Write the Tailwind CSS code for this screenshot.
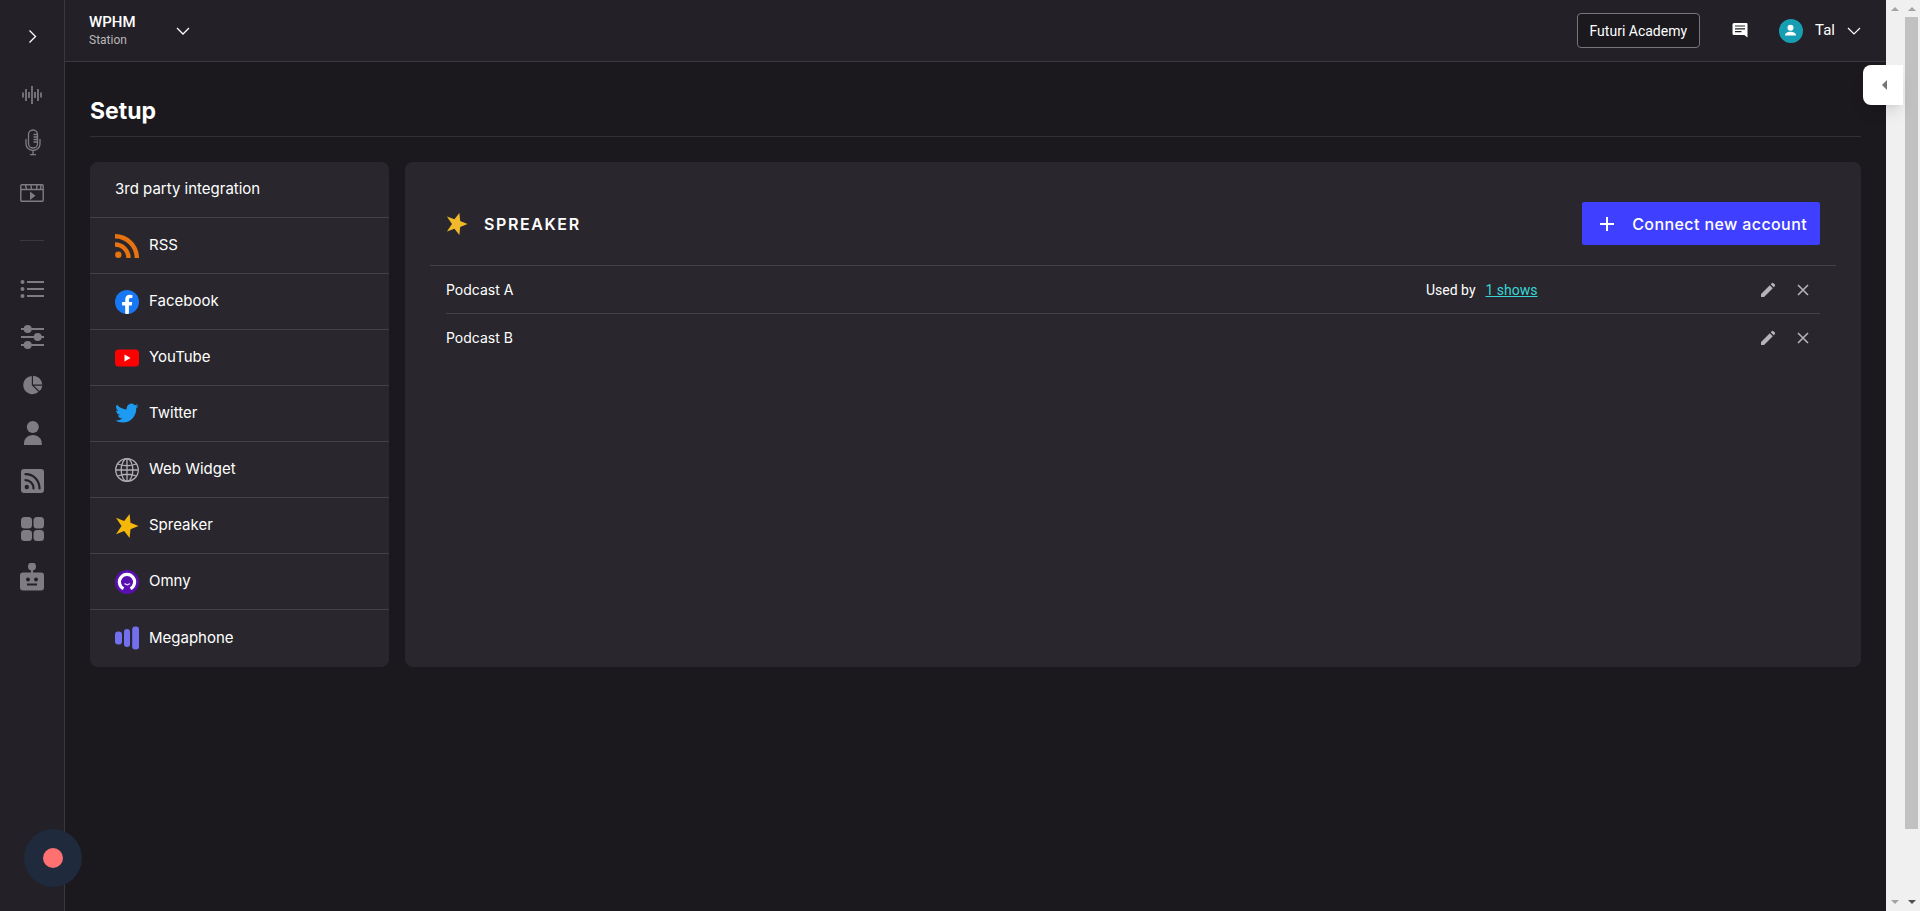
<!DOCTYPE html>
<html lang="en">
<head>
    <meta charset="UTF-8">
    <meta name="viewport" content="width=device-width, initial-scale=1.0">
    <title>Setup</title>
    <script src="https://cdn.jsdelivr.net/npm/@tailwindcss/browser@4"></script>
</head>
<body class="flex min-h-screen bg-[#1b191e] font-['Inter',sans-serif] text-white">

    <!-- Sidebar -->
    <nav aria-label="Main" class="flex w-[65px] shrink-0 flex-col items-center border-r border-[#3a383e] bg-[#232127] pt-3 text-[#7f7d83]">
        <button aria-label="Expand menu" class="mb-[11px] flex h-12 w-full items-center justify-center text-white">
            <svg class="size-6" viewBox="0 0 24 24" fill="none" stroke="currentColor" stroke-width="1.3"><path d="M9.500 6.500l6 6-6 6"/></svg>
        </button>
        <a href="#" aria-label="Audio" class="flex h-12 w-full items-center justify-center">
            <svg class="size-6" viewBox="0 0 24 24" fill="none" stroke="currentColor" stroke-width="1.7"><path d="M3 9.500v5M6 6v12M9 9v6M12 3v18M15 9v6M18 6v12M21 9.500v5"/></svg>
        </a>
        <a href="#" aria-label="Podcasts" class="flex h-12 w-full items-center justify-center">
            <svg class="h-7 w-6" viewBox="0 0 24 28" fill="none" stroke="currentColor" stroke-width="1.3" stroke-linecap="round"><rect x="8.500" y="1" width="9" height="18" rx="4.500"/><path d="M6 10.500v4.500a7 6.500 0 0 0 14 0v-4.500M13 21.500v4M10.500 25.700h5M14 5.500h3M14 8h3M14 10.500h3M14 13h3"/></svg>
        </a>
        <a href="#" aria-label="Video" class="flex h-12 w-full items-center justify-center">
            <svg class="size-6" viewBox="0 0 24 24" fill="none" stroke="currentColor" stroke-width="1.4"><rect x=".8" y="5.800" width="22.400" height="16.500" rx="1"/><path d="M1 10.500h22M5.500 6l1 4.500M11 6l.5 4.500M17 6l-.5 4.500M21 6l-.5 4.500"/><path d="M10 12.500v8.500l5.500-4.250z" fill="currentColor" stroke="none"/></svg>
        </a>
        <div class="flex h-[50px] w-full items-center justify-center"><hr class="w-6 border-[#3a383e]"></div>
        <a href="#" aria-label="List" class="flex h-12 w-full items-center justify-center">
            <svg class="size-6" viewBox="0 0 24 24" fill="none" stroke="currentColor" stroke-width="1.8"><path d="M7 5h17M7 12h17M7 19h17"/><g fill="currentColor" stroke="none"><circle cx="2.500" cy="5" r="2"/><circle cx="2.500" cy="12" r="2"/><circle cx="2.500" cy="19" r="2"/></g></svg>
        </a>
        <a href="#" aria-label="Filters" class="flex h-12 w-full items-center justify-center">
            <svg class="size-6" viewBox="0 0 24 24" fill="none" stroke="currentColor" stroke-width="2"><path d="M1 4h23M1 12h23M1 20h23"/><g fill="currentColor" stroke="none"><circle cx="7.700" cy="4" r="4"/><circle cx="17.700" cy="12" r="4"/><circle cx="7.700" cy="20" r="4"/></g></svg>
        </a>
        <a href="#" aria-label="Analytics" class="flex h-12 w-full items-center justify-center">
            <svg class="size-6" viewBox="0 0 24 24" fill="currentColor"><path d="M11.800 3a9.100 9.100 0 1 0 6.700 15.800l-6.700-6.600z"/><path d="M13 2.800v8.700h9.300a9.300 9.300 0 0 0-9.300-8.700z"/><path d="M14 12.700h8.300a9 9 0 0 1-2.700 5.400z"/></svg>
        </a>
        <a href="#" aria-label="Users" class="flex h-12 w-full items-center justify-center">
            <svg class="size-6" viewBox="0 0 24 24" fill="currentColor"><circle cx="12.800" cy="6" r="6"/><path d="M4 24v-1.500C4 17.500 8 14 12.900 14s8.900 3.500 8.900 8.500V24z"/></svg>
        </a>
        <a href="#" aria-label="Feeds" class="flex h-12 w-full items-center justify-center">
            <svg class="size-6" viewBox="0 0 24 24"><rect x="1" width="23" height="24" rx="3" fill="currentColor"/><circle cx="6.800" cy="18" r="2.200" fill="#232127"/><path d="M5.500 11.200c4.500 0 8 3.500 8 8.200M5.500 5.200c8 0 14 6 14 14.200" fill="none" stroke="#232127" stroke-width="2.200" stroke-linecap="round"/></svg>
        </a>
        <a href="#" aria-label="Apps" class="flex h-12 w-full items-center justify-center">
            <svg class="size-6" viewBox="0 0 24 24" fill="currentColor"><rect x="1" y="0" width="11" height="11.500" rx="3.500"/><rect x="13.500" y="0" width="10.500" height="11.500" rx="3.500"/><rect x="1" y="13" width="11" height="11" rx="3.500"/><rect x="13.500" y="13" width="10.500" height="11" rx="3.500"/></svg>
        </a>
        <a href="#" aria-label="Assistant" class="flex h-12 w-full items-center justify-center">
            <svg class="h-7 w-6" viewBox="0 0 24 28"><g fill="currentColor"><circle cx="12" cy="3.500" r="4"/><path d="M11 6h2v6h-2z"/><rect y="9.500" width="24" height="18" rx="3"/></g><g fill="#232127"><circle cx="8" cy="16.500" r="2"/><circle cx="16" cy="16.500" r="2"/><rect x="7" y="20.500" width="10" height="2"/></g></svg>
        </a>
    </nav>

    <div class="min-w-0 flex-1">
        <!-- Top bar -->
        <header class="flex h-[62px] items-center justify-between border-b border-[#3a383e] bg-[#232127] pr-[25px] pl-6 font-['Roboto',sans-serif]">
            <button class="flex items-center gap-10 text-left">
                <span class="flex flex-col pb-0.5">
                    <span class="text-[15px] leading-5 font-medium">WPHM</span>
                    <span class="text-xs leading-4 text-[#b8b7ba]">Station</span>
                </span>
                <svg class="h-2 w-3.5" viewBox="0 0 14 8" fill="none" stroke="currentColor" stroke-width="1.3"><path d="M1 1l6 6 6-6"/></svg>
            </button>
            <div class="flex items-center">
                <button class="h-[35px] rounded border border-[#77757a] bg-[#1b191e] px-3 text-sm">Futuri Academy</button>
                <button aria-label="Messages" class="ml-8">
                    <svg class="size-4" viewBox="0 0 16 16"><path d="M2 0h12.500q1 0 1 1v13.500L12.300 12H2q-1.500 0-1.500-1.500v-9Q.5 0 2 0z" fill="#fff"/><path d="M3 3h10M3 5.800h10M3 8.600h6.500" stroke="#232127" stroke-width="1.2"/></svg>
                </button>
                <button class="ml-[31px] flex items-center text-base">
                    <svg class="size-6" viewBox="0 0 24 24"><circle cx="12" cy="12" r="12" fill="#189eb2"/><circle cx="11.500" cy="8.700" r="3" fill="#fff"/><path d="M6 16.500c0-5 11-5 11 0z" fill="#fff"/></svg>
                    <span class="ml-3 text-[15px]">Tal</span>
                    <svg class="ml-3 h-2 w-3.5" viewBox="0 0 14 8" fill="none" stroke="currentColor" stroke-width="1.2"><path d="M1 1l6 6 6-6"/></svg>
                </button>
            </div>
        </header>

        <main class="px-[25px] pt-[33px]">
            <h1 class="border-b border-[#323036] pb-[9px] text-[23px] leading-8 font-bold">Setup</h1>

            <div class="mt-[25px] flex gap-4">
                <!-- Integrations -->
                <section class="w-[299px] shrink-0 rounded-lg bg-[#29272d] pb-px text-[15px]">
                    <h2 class="flex h-14 items-center border-b border-[#444247] px-[25px]">3rd party integration</h2>
                    <ul>
                        <li><a href="#" class="flex h-14 items-center gap-2.5 border-b border-[#444247] px-[25px]">
                            <svg class="size-6" viewBox="0 0 24 24"><circle cx="3.300" cy="20.800" r="3.200" fill="#e67310"/><path d="M0 10.500a13.500 13.500 0 0 1 13.500 13.500M0 2.200A21.800 21.800 0 0 1 21.800 24" fill="none" stroke="#e67310" stroke-width="4.400"/></svg>
                            RSS</a></li>
                        <li><a href="#" class="flex h-14 items-center gap-2.5 border-b border-[#444247] px-[25px]">
                            <svg class="size-6" viewBox="0 0 24 24"><circle cx="12" cy="12" r="12" fill="#1877f2"/><path d="M16.700 15.500l.5-3.500h-3.300V9.800c0-.95.5-1.900 2-1.900h1.500V5s-1.400-.25-2.700-.25c-2.700 0-4.500 1.650-4.500 4.650V12H7.100v3.500h3.100v8.300a12 12 0 0 0 3.700 0v-8.300z" fill="#fff"/></svg>
                            Facebook</a></li>
                        <li><a href="#" class="flex h-14 items-center gap-2.5 border-b border-[#444247] px-[25px]">
                            <svg class="size-6" viewBox="0 0 24 24"><rect y="3.500" width="24" height="17" rx="3.500" fill="#f00"/><path d="M9.500 8.500v7l6-3.500z" fill="#fff"/></svg>
                            YouTube</a></li>
                        <li><a href="#" class="flex h-14 items-center gap-2.5 border-b border-[#444247] px-[25px]">
                            <svg class="size-6" viewBox="0 0 24 24" fill="#1d9bf0"><path d="M23.600 3.900a9.600 9.600 0 0 1-2.750.75 4.800 4.800 0 0 0 2.100-2.650 9.600 9.600 0 0 1-3.040 1.160 4.790 4.790 0 0 0-8.160 4.370A13.600 13.600 0 0 1 1.880 2.520a4.790 4.790 0 0 0 1.480 6.390 4.770 4.770 0 0 1-2.170-.6v.06a4.790 4.790 0 0 0 3.840 4.690 4.800 4.800 0 0 1-2.160.08 4.790 4.790 0 0 0 4.470 3.320A9.600 9.600 0 0 1 .27 18.450a13.540 13.540 0 0 0 7.340 2.150c8.800 0 13.620-7.290 13.620-13.620l-.02-.62a9.700 9.700 0 0 0 2.390-2.460z"/></svg>
                            Twitter</a></li>
                        <li><a href="#" class="flex h-14 items-center gap-2.5 border-b border-[#444247] px-[25px]">
                            <svg class="size-6" viewBox="0 0 24 24" fill="none" stroke="#b0afb2" stroke-width="1.3"><circle cx="12" cy="12" r="11.300"/><ellipse cx="12" cy="12" rx="5.800" ry="11.300"/><path d="M12 .7v22.600M.7 12h22.600M2.500 6q9.500 3.500 19 0M2.500 18q9.500-3.500 19 0"/></svg>
                            Web Widget</a></li>
                        <li><a href="#" aria-current="page" class="flex h-14 items-center gap-2.5 border-b border-[#444247] px-[25px]">
                            <svg class="size-6" viewBox="0 0 24 24"><path d="M14.600 0l.9 8.800 8 3.200-8 3.200-.9 8.800-5.400-6.900L1 20.300 6.500 12 1 3.700l8.200 3.200z" fill="#f5b80a"/></svg>
                            Spreaker</a></li>
                        <li><a href="#" class="flex h-14 items-center gap-2.5 border-b border-[#444247] px-[25px]">
                            <svg class="size-6" viewBox="0 0 24 24"><circle cx="12" cy="12" r="12" fill="#5a10b0"/><path d="M8.500 18.700a7.600 7.600 0 1 1 7 0" fill="none" stroke="#fff" stroke-width="3.2"/><path d="M9.500 13.500q2.700 2.500 5.400 0" fill="none" stroke="#e3c8ff" stroke-width="1.5"/></svg>
                            Omny</a></li>
                        <li><a href="#" class="flex h-14 items-center gap-2.5 px-[25px]">
                            <svg class="size-6" viewBox="0 0 24 24" fill="#7370f0"><rect y="5.500" width="7" height="13" rx="3.300"/><rect x="9" y="3" width="6" height="18" rx="3"/><rect x="17.200" y=".5" width="6.800" height="23" rx="3"/></svg>
                            Megaphone</a></li>
                    </ul>
                </section>

                <!-- Connected accounts -->
                <section class="min-w-0 flex-1 rounded-lg bg-[#29272d] px-[25px]">
                    <div class="flex h-[104px] items-center justify-between border-b border-[#444247] px-4 pt-5">
                        <h2 class="flex items-center gap-4 text-base font-semibold tracking-widest">
                            <svg class="size-[22px]" viewBox="0 0 24 24"><path d="M14.600 0l.9 8.800 8 3.200-8 3.200-.9 8.800-5.400-6.900L1 20.300 6.500 12 1 3.700l8.200 3.200z" fill="#efb92b"/></svg>
                            SPREAKER
                        </h2>
                        <button class="flex h-[43px] items-center gap-[17px] rounded-xs bg-[#3f3fff] pr-[13px] pl-[17px] text-base font-medium tracking-wide">
                            <svg class="size-4" viewBox="0 0 16 16" stroke="currentColor" stroke-width="2"><path d="M8 1v14M1 8h14"/></svg>
                            Connect new account
                        </button>
                    </div>
                    <ul class="mx-4 text-sm">
                        <li class="flex h-12 items-center border-b border-[#444247]">
                            <span class="flex-1">Podcast A</span>
                            <span class="flex w-[334px] gap-2.5 font-['Roboto',sans-serif]">Used by <a href="#" class="text-[#38d6d6] underline">1 shows</a></span>
                            <span class="flex w-[60px] gap-[19px] text-[#b5b3b5]">
                                <button aria-label="Edit Podcast A"><svg class="size-4" viewBox="0 0 16 16" fill="currentColor"><path d="M1 12l8.800-8.800 3 3L4 15H1zM10.700 2.300l1.100-1.100q.9-.7 1.700 0l1.300 1.300q.7.8 0 1.700l-1.100 1.100z"/></svg></button>
                                <button aria-label="Remove Podcast A"><svg class="size-4" viewBox="0 0 16 16" stroke="currentColor" stroke-width="1.6"><path d="M3 3l10 10M13 3L3 13"/></svg></button>
                            </span>
                        </li>
                        <li class="flex h-12 items-center">
                            <span class="flex-1">Podcast B</span>
                            <span class="flex w-[60px] gap-[19px] text-[#b5b3b5]">
                                <button aria-label="Edit Podcast B"><svg class="size-4" viewBox="0 0 16 16" fill="currentColor"><path d="M1 12l8.800-8.800 3 3L4 15H1zM10.700 2.300l1.100-1.100q.9-.7 1.700 0l1.300 1.300q.7.8 0 1.700l-1.100 1.100z"/></svg></button>
                                <button aria-label="Remove Podcast B"><svg class="size-4" viewBox="0 0 16 16" stroke="currentColor" stroke-width="1.6"><path d="M3 3l10 10M13 3L3 13"/></svg></button>
                            </span>
                        </li>
                    </ul>
                </section>
            </div>
        </main>
    </div>

    <!-- Scroll tracks -->
    <div class="flex w-[34px] shrink-0 bg-[#f0f0f0]">
        <div class="flex w-[17px] flex-col items-center justify-between py-[7px]">
            <svg class="h-1 w-2" viewBox="0 0 8 4" fill="#a3a3a3"><path d="M0 4l4-4 4 4z"/></svg>
            <svg class="h-1 w-2" viewBox="0 0 8 4" fill="#a3a3a3"><path d="M0 0l4 4 4-4z"/></svg>
        </div>
        <div class="flex w-[17px] flex-col items-center py-[7px]">
            <svg class="h-1 w-2 shrink-0" viewBox="0 0 8 4" fill="#a3a3a3"><path d="M0 4l4-4 4 4z"/></svg>
            <div class="mt-1.5 mb-[71px] w-[13px] flex-1 bg-[#c1c1c1]"></div>
            <svg class="h-1 w-2 shrink-0" viewBox="0 0 8 4" fill="#505050"><path d="M0 0l4 4 4-4z"/></svg>
        </div>
    </div>

    <!-- Side drawer handle -->
    <button aria-label="Open drawer" class="fixed top-[65px] right-[17px] flex h-10 w-10 items-center justify-center rounded-l-lg bg-white pl-[3px] shadow-lg">
        <svg class="h-2.5 w-[5px]" viewBox="0 0 5 10" fill="#757575"><path d="M5 0v10L0 5z"/></svg>
    </button>

    <!-- Recorder -->
    <button aria-label="Record" class="fixed bottom-6 left-6 flex size-[58px] items-center justify-center rounded-full bg-[#1f2a3c]">
        <span class="size-5 rounded-full bg-[#ff7070]"></span>
    </button>
</body>
</html>
